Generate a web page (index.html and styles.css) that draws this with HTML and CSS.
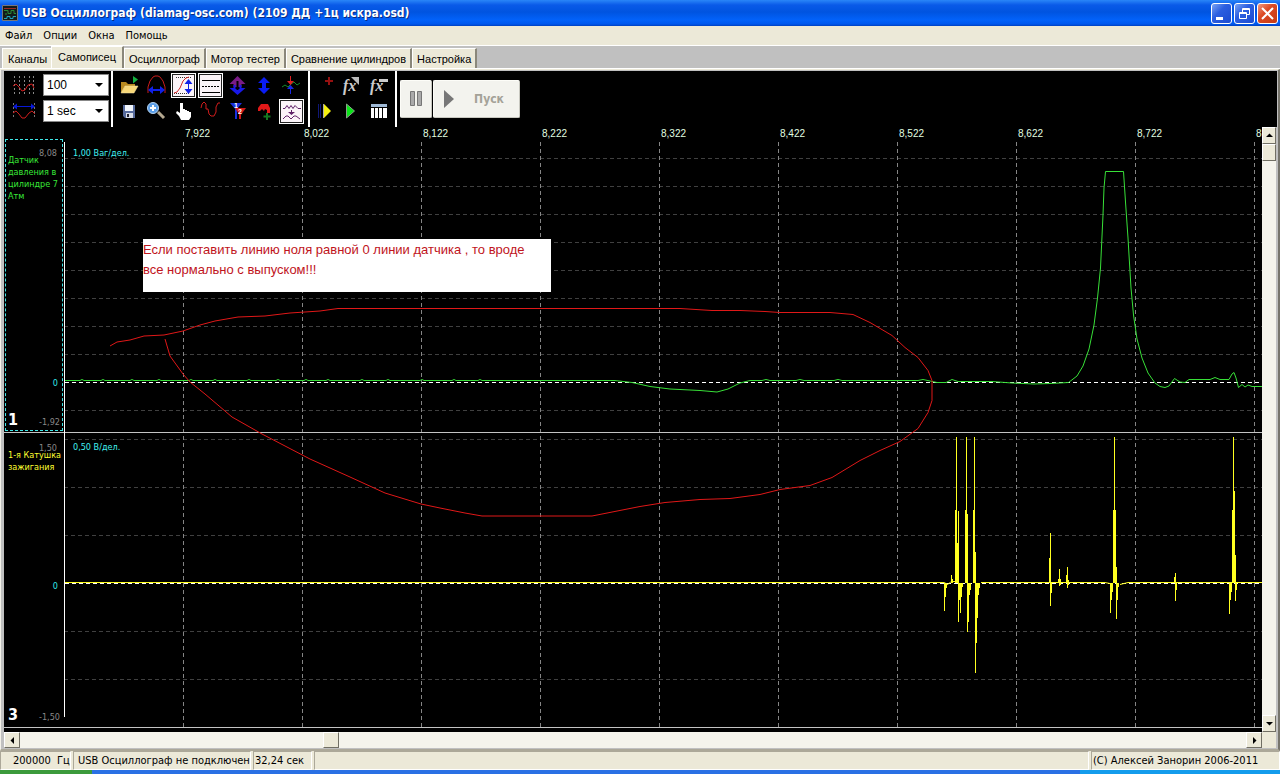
FILE: index.html
```html
<!DOCTYPE html>
<html lang="ru">
<head>
<meta charset="utf-8">
<title>USB Осциллограф</title>
<link rel="stylesheet" href="styles.css">
</head>
<body>
<header class="titlebar">
  <svg class="app-icon" viewBox="0 0 16 16"><path fill="#121a18" stroke="#777" d="M.5.5h15v15H.5z"/><path stroke="#9a2a20" fill="none" d="M2 3.500h12"/><path stroke="#2a8a35" fill="none" d="M2 5.500h4v3h3v-3h3v3h2M4 8v2"/><path stroke="#1ca0b8" fill="none" d="M2 13.500h3v-2h3v2h3v-2h3"/></svg>
  <h1>USB Осциллограф (diamag-osc.com) (2109 ДД +1ц искра.osd)</h1>
  <div class="window-buttons">
    <button class="win" aria-label="Свернуть"><svg viewBox="0 0 19 19"><path fill="#fff" d="M4 13h7v3H4z"/></svg></button>
    <button class="win" aria-label="Восстановить"><svg viewBox="0 0 19 19"><path fill="none" stroke="#fff" d="M4.500 8.500h7v6h-7zM4 9.500h8M7.500 8V4.500h7v6H12M7 5.500h8"/></svg></button>
    <button class="win close" aria-label="Закрыть"><svg viewBox="0 0 19 19"><path stroke="#fff" stroke-width="2" d="M4 4l11 11M15 4L4 15"/></svg></button>
  </div>
</header>

<nav class="menubar">
  <button>Файл</button><button>Опции</button><button>Окна</button><button>Помощь</button>
</nav>

<div class="tabs" role="tablist">
  <button role="tab">Каналы</button>
  <button role="tab" class="active" aria-selected="true">Самописец</button>
  <button role="tab">Осциллограф</button>
  <button role="tab">Мотор тестер</button>
  <button role="tab">Сравнение цилиндров</button>
  <button role="tab">Настройка</button>
</div>

<main class="workspace">
  <div class="toolbar">
    <div class="scales">
      <label for="amp"><svg viewBox="0 0 24 22"><path stroke="#888" stroke-dasharray="2 2" d="M2.500 2v18M7.500 2v18M12.500 2v18M17.500 2v18M21.500 2v18"/><path fill="none" stroke="#d01c1c" d="M1 12l3-2 3 3 3 4 3-1 3-5 4-1 2 4"/></svg></label>
      <span class="combo"><select id="amp"><option>100</option></select></span>
      <label for="time"><svg viewBox="0 0 24 22"><path stroke="#777" stroke-dasharray="2 2" d="M1.500 3v16M22.500 3v16"/><path stroke="#0818d8" d="M2 6.500h20"/><path fill="#0818d8" d="M1 6.500l4-3v6zM23 6.500l-4-3v6z"/><path fill="none" stroke="#d01c1c" d="M1 13l3-2 3 3 3 4 3 0 4-5 3-2 3 3"/></svg></label>
      <span class="combo"><select id="time"><option>1 sec</option></select></span>
    </div>
    <div class="tools main-tools">
      <button aria-label="Открыть"><svg viewBox="0 0 25 25"><path fill="#b98a20" d="M4 20V9h5l2 2h7v3H8z"/><path fill="#f8d878" stroke="#f3e0a8" stroke-width=".5" d="M4 20l4-7h13l-4 7z"/><path fill="#14b040" d="M16 3l5 3.500-5 4z"/></svg></button>
      <button aria-label="Ширина"><svg viewBox="0 0 25 25"><path fill="none" stroke="#c81c1c" d="M4 20V14l2-6 3-4 2-1h3l2 1 3 4 2 6v6"/><path stroke="#1020e8" stroke-width="2" d="M7 17h12"/><path fill="#1020e8" d="M4 17l5-4v8zM21 17l-5-4v8z"/></svg></button>
      <button class="on" aria-label="Высота"><svg viewBox="0 0 25 25"><path stroke="#333" stroke-dasharray="1 1" d="M5 4.500h15M3 20.500h15"/><path fill="none" stroke="#d02828" d="M3 20l3-1 3-4 3-7 3-3 3-1"/><path stroke="#1020e8" d="M17.500 9v8"/><path fill="#1020e8" d="M17.500 6l4 5h-8zM17.500 21l4-5h-8z"/></svg></button>
      <button class="on" aria-label="Сетка"><svg viewBox="0 0 25 25"><path stroke="#000" d="M4 7.500h18M4 19.500h18"/><path stroke="#000" stroke-dasharray="2 1" d="M4 13.500h18"/></svg></button>
      <button aria-label="Растянуть"><svg viewBox="0 0 25 25"><path fill="#7a1b86" d="M12.500 3l8 8h-4v3h-8v-3h-4z"/><path fill="#1818e8" d="M12.500 22l8-7h-4v-3h-2v4h-4v-4h-2v3h-4z"/><path fill="#000" d="M11.500 8h2v9h-2z"/></svg></button>
      <button aria-label="Сдвинуть"><svg viewBox="0 0 25 25"><path fill="#0a1cf4" d="M12 4l6 6h-4v5h4l-6 6-6-6h4v-5H6z"/></svg></button>
      <button aria-label="Синхронизация"><svg viewBox="0 0 25 25"><path fill="none" stroke="#168a2c" d="M3 14l3-2 3 2 3-3 3-2 3 3 3-2"/><path stroke="#e02020" d="M11.500 3v8"/><path fill="#e02020" d="M8 8h7l-3.500 4z"/><path stroke="#1828e8" d="M11.500 13v8"/><path fill="#1828e8" d="M8 16h7l-3.500-4z"/></svg></button>
      <button aria-label="Сохранить"><svg viewBox="0 0 25 25"><path fill="#566a9c" d="M6 6h12v13H8l-2-2z"/><path fill="#f1f5fb" d="M8 6h8v6H8z"/><path fill="#d8dde8" d="M9 14h7v5H9z"/><path fill="#223" d="M10 15h2v3h-2z"/></svg></button>
      <button aria-label="Увеличить"><svg viewBox="0 0 25 25"><path stroke="#b4a890" stroke-width="3" d="M14 13l6 6"/><circle cx="9" cy="9" r="5.500" fill="#5a9ee8" stroke="#b8d4f0"/><path stroke="#fff" stroke-width="2" d="M6 9h6M9 6v6"/></svg></button>
      <button aria-label="Рука"><svg viewBox="0 0 25 25"><path fill="#fff" d="M9 4h3v6h2v1h2v1h2v1h2v5l-2 3h-8l-2-4-3-3 1-2 3 2z"/></svg></button>
      <button aria-label="Сигнал"><svg viewBox="0 0 25 25"><path fill="none" stroke="#d01c1c" d="M3 9l1-4 2-2 2 2 0 5 2 0 1 5 2 2 3 0 2-4 0-5 2-4h2"/></svg></button>
      <button aria-label="Маркеры"><svg viewBox="0 0 25 25"><path stroke="#1830e0" stroke-width="2" d="M11 5v15"/><path stroke="#d01818" stroke-width="2" d="M15 10v10"/><path fill="#1830e0" d="M5 4h12l-6 7z"/><path fill="#d01818" d="M10 9h11l-6 8z"/><text class="marker" x="9" y="9">1</text><text class="marker" x="13" y="15">2</text></svg></button>
      <button aria-label="Добавить"><svg viewBox="0 0 25 25"><path fill="#e01818" d="M6 9l3-4h7l2 4v5h-3v-3l-2-1-1 2-2-2-2 2H6z"/><path stroke="#147820" stroke-width="2" d="M15 14v7M11.500 17.500h7"/></svg></button>
      <button class="on" aria-label="Фильтр"><svg viewBox="0 0 25 25"><path fill="none" stroke="#602068" d="M4 9.500h2l2-3 2 3 2-3 2 3 2-3 3 3h3M4 20l3-3h2l3 3 3-3h2l4 3"/><path fill="#602068" d="M12 11h1v2h3l-3.500 3L9 13h3z"/></svg></button>
    </div>
    <div class="tools math-tools">
      <button aria-label="Точка"><svg viewBox="0 0 25 25"><path stroke="#961010" stroke-width="2" d="M16 4v8M12 8h8"/></svg></button>
      <button aria-label="Функция"><svg viewBox="0 0 25 25"><text class="fx" x="3" y="18">fx</text><path fill="#bbb" d="M11 4h8v8z"/></svg></button>
      <button aria-label="Убрать функцию"><svg viewBox="0 0 25 25"><text class="fx" x="3" y="18">fx</text><path fill="#ccc" d="M12 6h9v3h-9z"/></svg></button>
      <button aria-label="Шаг"><svg viewBox="0 0 25 25"><path stroke="#101878" d="M5.500 5v14M7.500 5v14"/><path stroke="#aaa" d="M10.500 5v14"/><path fill="#f4ee10" d="M11 5l7 7-7 7z"/></svg></button>
      <button aria-label="Воспроизвести"><svg viewBox="0 0 25 25"><path fill="#0ae418" stroke="#87a087" d="M6.500 5l8 7-8 7z"/></svg></button>
      <button aria-label="Таблица"><svg viewBox="0 0 25 25"><path fill="#9eb8d4" d="M4 5h16v3H4z"/><path fill="#fff" d="M4 9h3v10H4zM8 9h3v10H8zM12 9h3v10h-3zM16 9h4v10h-4z"/></svg></button>
    </div>
    <div class="record">
      <button class="pause" aria-label="Пауза"><svg viewBox="0 0 14 18"><path fill="#aaa" stroke="#777" d="M1.500 1.500h4v14h-4zM8.500 1.500h4v14h-4z"/></svg></button>
      <button class="start"><svg viewBox="0 0 12 20"><path fill="#777" d="M1 1l10 9-10 9z"/></svg><span>Пуск</span></button>
    </div>
  </div>

  <div class="stage">
    <section class="plot" aria-label="Осциллограмма">
      <svg class="traces" viewBox="4 127 1258 605" preserveAspectRatio="none">
        <path class="grid-row" d="M64 158.500H1262M64 186.500H1262M64 214.500H1262M64 242.500H1262M64 270.500H1262M64 298.500H1262M64 326.500H1262M64 354.500H1262M64 410.500H1262M64 439.500H1262M64 487.500H1262M64 535.500H1262M64 631.500H1262M64 679.500H1262"/>
        <path class="grid-col" d="M183.500 142V727M302.500 142V727M421.500 142V727M540.500 142V727M659.500 142V727M778.500 142V727M897.500 142V727M1016.500 142V727M1135.500 142V727M1254.500 142V727"/>
        <path class="divider" d="M4 432.500H1262M4 727.500H1262"/>
        <path class="axis" d="M64.500 142V717"/>
        <path class="zero" d="M65 382.500H1262"/>
        <path class="pressure" d="M65 380.500H80l2-1 2 1h17l2-1 2 1h25l2-1 2 1h23l2-1 2 1h28l2-1 2 1h20l2-1 2 1h30l2-1 2 1h25l2-1 2 1h24l2-1 2 1h18l2-1 2 1h30l2-1 2 1h22l2-1 2 1h30l2-1 2 1h28l2-1 2 1h22l2-1 2 1H615L632 382.500 650 386.500 670 389 700 390.500 717 392 728 389 740 383 750 380.500H762L766 379.500 770 380.500H796L800 379.500 804 380.500H834L838 379.500 842 380.500H918L923 379.500 930 381 937 382.500H946L952 379.500 958 381.500H992L1012 383 1034 384 1050 383.500 1068.500 382.500 1077 376 1083 366 1089 349 1094 325 1097.500 298 1100.500 268 1103 215 1104 188 1105.500 171.500H1123.500L1125.500 202 1128 238 1131 288 1133.500 315 1137 339 1142 358 1148 373 1155 383 1160 386.500 1165 387.500 1169 386 1174.500 378.500 1180 382 1185 382.500 1189 379.500H1210L1215 377.500 1220 379.500H1229L1232 374 1234 372.500 1236 378 1238.500 387.500 1242 384.500 1245 387 1248 385 1252 386.500H1262"/>
        <path class="zero" d="M65 583.500H1262"/>
        <path class="coil" d="M65 582.500H944l4 2 3-3h5M981 582.500H1105l5 1M1120 584.500l8-2H1262"/>
        <path class="coil" d="M944.500 583V611M945.500 583V597M946.500 583V588M951.500 575V583M952.500 579V583M955.500 510V583M956.500 437V583M957.500 543V583M958.500 511V622M959.500 583V600M960.500 583V613M961.500 583V597M962.500 583V587M965.500 510V583M966.500 437V583M967.500 514V632M968.500 583V622M969.500 583V595M970.500 583V590M973.500 510V583M974.500 437V583M975.500 552V673M976.500 583V643M977.500 583V618M978.500 583V595M979.500 583V588M1049.500 558V583M1050.500 533V606M1051.500 583V593M1058.500 579V583M1059.500 569V586M1060.500 579V585M1066.500 575V583M1067.500 567V588M1068.500 580V585M1110.500 583V613M1111.500 583V600M1112.500 583V592M1113.500 510V583M1114.500 437V583M1115.500 510V583M1116.500 567V619M1117.500 583V600M1118.500 583V587M1174.500 577V583M1175.500 573V601M1176.500 583V590M1229.500 583V614M1230.500 583V600M1231.500 583V592M1232.500 510V583M1233.500 437V583M1234.500 491V583M1235.500 555V601M1236.500 583V590"/>
        <path class="pencil" d="M110 346l7-4 13-2 14-4 20-1 19-4 17-6 15-4 23-4 27-1 25-3 30-2 18-2.500H680l32 2h28l25 1 15 1h50l23 2 17 8 22 13 13 12 13 10 10 13 4 10v20l-4 12-10 16-18 13-20 9-20 10-28 17-22 8-30 4-20 5-30 4-30 1-35 3-25 4-48 9.500H482l-17-3-25-5-19-4-36-11-35-16-40-18-48-25-30-17-27-23-15-12-7-8-13-18-5-17"/>
      </svg>
      <p class="note">Если поставить линию ноля равной 0 линии датчика , то вроде все нормально с выпуском!!!</p>
      <div class="timescale">
        <span>7,922</span><span>8,022</span><span>8,122</span><span>8,222</span><span>8,322</span><span>8,422</span><span>8,522</span><span>8,622</span><span>8,722</span><span>8,822</span>
      </div>
      <article class="channel selected">
        <div class="info">
          <span class="limit">8,08</span>
          <h2>Датчик давления в цилиндре 7 Атм</h2>
          <span class="nil">0</span>
          <div class="foot"><b>1</b><span>-1,92</span></div>
        </div>
        <span class="division">1,00 Ваг/дел.</span>
      </article>
      <article class="channel ignition">
        <div class="info">
          <span class="limit">1,50</span>
          <h2>1-я Катушка<br>зажигания</h2>
          <span class="nil">0</span>
          <div class="foot"><b>3</b><span>-1,50</span></div>
        </div>
        <span class="division">0,50 В/дел.</span>
      </article>
    </section>
    <div class="scroll vertical">
      <button aria-label="Вверх"><svg viewBox="0 0 7 7"><path d="M0 5h7L3.500 1.500z"/></svg></button>
      <div class="thumb"></div><div class="track"></div>
      <button aria-label="Вниз"><svg viewBox="0 0 7 7"><path d="M0 2h7L3.500 5.500z"/></svg></button>
    </div>
    <div class="scroll horizontal">
      <button aria-label="Влево"><svg viewBox="0 0 7 7"><path d="M5 0v7L1.500 3.500z"/></svg></button>
      <div class="track before"></div><div class="thumb"></div><div class="track"></div>
      <button aria-label="Вправо"><svg viewBox="0 0 7 7"><path d="M2 0v7l3.500-3.500z"/></svg></button>
    </div>
    <div class="corner"></div>
  </div>
</main>

<footer class="status">
  <span class="rate">200000&nbsp; Гц</span><span class="link">USB Осциллограф не подключен</span><span class="length">32,24 сек</span><span class="blank"></span><span class="author">(С) Алексей Занорин 2006-2011</span>
</footer>
<div class="taskbar"><i class="go"></i><i class="apps"></i><i class="tray"></i></div>
</body>
</html>
```
FILE: styles.css
```css
* { box-sizing: border-box; }
body {
  margin: 0;
  height: 100vh;
  display: flex;
  flex-direction: column;
  overflow: hidden;
  background: #ece9d8;
  color: #000;
  font: 11px "DejaVu Sans Condensed", "DejaVu Sans", sans-serif;
}
button {
  padding: 0;
  border: 0;
  background: none;
  color: inherit;
  font: inherit;
}
svg { display: block; }
h1, h2, p { margin: 0; }

.titlebar {
  flex: none;
  height: 26px;
  display: flex;
  align-items: center;
  padding: 0 2px;
  background: linear-gradient(#2a86f8 0, #0a5ae8 5px, #0054e0 12px, #0262fa 20px, #0058ee 24px, #0040c0);
}
.app-icon { width: 16px; height: 16px; }
.titlebar h1 {
  flex: 1;
  padding-left: 4px;
  color: #fff;
  font: bold 12px "DejaVu Sans Condensed", "DejaVu Sans", sans-serif;
  text-shadow: 1px 1px 0 #0a2a80;
  white-space: nowrap;
}
.window-buttons { display: flex; gap: 2px; }
.win {
  width: 21px;
  height: 21px;
  border: 1px solid #fff;
  border-radius: 3px;
  background: linear-gradient(135deg, #7ba4f4, #2c5fe0 40%, #1c4bd0);
}
.win.close { background: linear-gradient(135deg, #f09a80, #dc4a24 40%, #c43a14); }
.win svg { width: 19px; height: 19px; }

.menubar {
  flex: none;
  height: 20px;
  display: flex;
  gap: 11px;
  padding: 0 5px;
  border-bottom: 1px solid #fff;
}

.tabs {
  flex: none;
  height: 23px;
  display: flex;
  align-items: flex-end;
  padding-left: 2px;
  background: #c0c0c0;
  border-bottom: 1px solid #fff;
  font: 11px "Liberation Sans", Arial, sans-serif;
}
.tabs button {
  height: 20px;
  padding: 1px 4px 0;
  background: #ece9d8;
  border: 1px solid #fff;
  border-right: 2px solid #8a877a;
  border-bottom: 0;
  white-space: nowrap;
}
.tabs button:first-child { padding-left: 5px; border-right: 0; }
.tabs .active { height: 22px; padding: 0 6px 2px; }

.workspace {
  flex: 1;
  min-height: 0;
  display: flex;
  flex-direction: column;
  padding: 1px 0 1px;
  border: 1px solid #f4f2ea;
  border-top: 1px solid #ece9d8;
  border-right: 2px solid #77756c;
  border-bottom: 2px solid #aca899;
  background: #c0c0c0;
}
.toolbar {
  flex: none;
  height: 56px;
  margin: 0 1px 0 3px;
  display: flex;
  align-items: stretch;
  background: #000;
}
.scales {
  display: grid;
  grid-template-columns: 24px 66px;
  grid-auto-rows: 22px;
  gap: 4px 7px;
  padding: 3px 2px 0 8px;
}
.scales svg { width: 24px; height: 22px; }
.combo { position: relative; display: block; }
.combo::after {
  content: "";
  position: absolute;
  right: 6px;
  top: 9px;
  border: 4px solid transparent;
  border-top-color: #000;
  border-bottom: 0;
  pointer-events: none;
}
.combo select {
  width: 100%;
  height: 22px;
  padding: 0 3px;
  appearance: none;
  border: 1px solid #888;
  border-radius: 0;
  background: #fff;
  color: #000;
  font: 12px "Liberation Sans", Arial, sans-serif;
}
.tools {
  display: grid;
  grid-auto-rows: 25px;
  gap: 1px 2px;
  padding: 2px 3px;
  border-left: 2px solid #fff;
}
.main-tools { grid-template-columns: repeat(7, 25px); padding: 2px 4px; }
.math-tools { grid-template-columns: repeat(3, 25px); }
.tools svg { width: 25px; height: 25px; }
.tools .on { background: #fbf4f8; box-shadow: inset 0 0 0 1px #fff, inset 0 0 0 2px #222; }
.marker { fill: #fff; font: bold 7px "Liberation Sans", sans-serif; }
.fx { fill: #ccc; font: italic bold 16px "Liberation Serif", serif; }
.record {
  display: flex;
  gap: 1px;
  align-items: center;
  padding-left: 3px;
  border-left: 2px solid #fff;
}
.record button {
  height: 38px;
  display: flex;
  align-items: center;
  justify-content: center;
  background: #f3f3ee;
  border: 1px solid #fdfdf8;
  border-right-color: #c8c8c0;
  border-bottom-color: #c8c8c0;
  border-radius: 2px;
}
.record .pause { width: 32px; }
.record .start { width: 87px; gap: 19px; padding-right: 6px; }
.pause svg { width: 14px; height: 18px; }
.start svg { width: 12px; height: 20px; }
.start span { color: #a4a298; font: bold 12px "DejaVu Sans Condensed", sans-serif; }

.stage {
  flex: 1;
  min-height: 0;
  display: grid;
  grid-template: minmax(0, 1fr) 16px / minmax(0, 1fr) 14px;
  margin: 0 2px 0 3px;
}
.plot {
  position: relative;
  display: flex;
  flex-direction: column;
  padding-bottom: 5px;
  overflow: hidden;
  background: #000;
  font: 9px "DejaVu Sans Condensed", "DejaVu Sans", sans-serif;
}
.traces { position: absolute; inset: 0; width: 100%; height: 100%; }
.traces path { fill: none; stroke-width: 1; vector-effect: non-scaling-stroke; }
.traces .grid-row { stroke: #404040; stroke-dasharray: 4 3; shape-rendering: crispEdges; }
.traces .grid-col { stroke: #858585; stroke-dasharray: 4 3; shape-rendering: crispEdges; }
.traces .divider { stroke: #c4c4c4; }
.traces .axis { stroke: #fff; }
.traces .zero { stroke: #fff; stroke-dasharray: 4 3; }
.traces .pressure { stroke: #38e038; }
.traces .coil { stroke: #ffff20; }
.traces .pencil { stroke: #e01818; }
.note {
  position: absolute;
  left: 139px;
  top: 112px;
  width: 408px;
  min-height: 53px;
  padding: 1px 16px 0 0;
  background: #fff;
  color: #c0141c;
  font: 13px/20px "Liberation Sans", Arial, sans-serif;
}
.timescale {
  position: relative;
  flex: none;
  height: 12px;
  display: flex;
  padding-left: 181px;
  color: #e0ffe0;
  font: 10px/14px "Liberation Sans", Arial, sans-serif;
}
.timescale span { flex: 0 0 119px; }
.channel {
  position: relative;
  flex: 1;
  min-height: 0;
  display: flex;
  gap: 10px;
}
.info {
  width: 58px;
  margin-left: 1px;
  display: flex;
  flex-direction: column;
  padding: 8px 4px 2px 2px;
  border: 1px solid transparent;
}
.selected .info { margin-bottom: 2px; border: 1px dashed #40e8e8; }
.limit {
  height: 6px;
  padding-right: 1px;
  color: #888;
  line-height: 10px;
  text-align: right;
}
.info h2 { flex: 1; color: #38e838; font-size: 9px; font-weight: normal; line-height: 12px; }
.ignition h2 { color: #ffff30; white-space: nowrap; }
.ignition .info { padding-top: 9px; padding-bottom: 3px; }
.nil { color: #30e8e8; line-height: 12px; text-align: right; }
.foot { display: flex; align-items: flex-end; justify-content: space-between; margin-right: -2px; padding-top: 23px; color: #888; line-height: 12px; }
.ignition .foot { padding-top: 115px; }
.foot b { color: #fff; font-size: 16px; line-height: 16px; }
.division { padding-top: 8px; color: #40f0f0; line-height: 12px; }

.scroll { display: flex; background: #ece9d8; }
.vertical { flex-direction: column; }
.scroll .track { flex: 1; background: #f5f4ec; }
.horizontal .before { flex: 0 1 303px; }
.scroll button, .scroll .thumb {
  flex: none;
  display: grid;
  place-items: center;
  background: #ece9d8;
  border: 1px solid #fff;
  border-right-color: #716f64;
  border-bottom-color: #716f64;
}
.vertical button, .vertical .thumb { height: 17px; }
.horizontal button, .horizontal .thumb { width: 16px; }
.scroll svg { width: 7px; height: 7px; }
.corner { background: #ece9d8; }

.status {
  flex: none;
  height: 19px;
  display: flex;
  gap: 2px;
}
.status span {
  flex: none;
  padding: 2px 4px 0;
  border: 1px solid #fff;
  border-top-color: #aca899;
  border-left-color: #aca899;
  white-space: nowrap;
}
.status .rate { width: 71px; padding-left: 12px; }
.status .link { width: 178px; padding-right: 0; }
.status .length { width: 59px; padding-left: 1px; }
.status .blank { flex: 1; }
.status .author { width: 189px; padding-left: 1px; }
.taskbar { flex: none; height: 4px; display: flex; }
.taskbar .go { flex: 0 0 92px; background: #3c9a3c; }
.taskbar .apps { flex: 1; background: #2a70e4; }
.taskbar .tray { flex: 0 0 200px; background: #149cec; }
```
